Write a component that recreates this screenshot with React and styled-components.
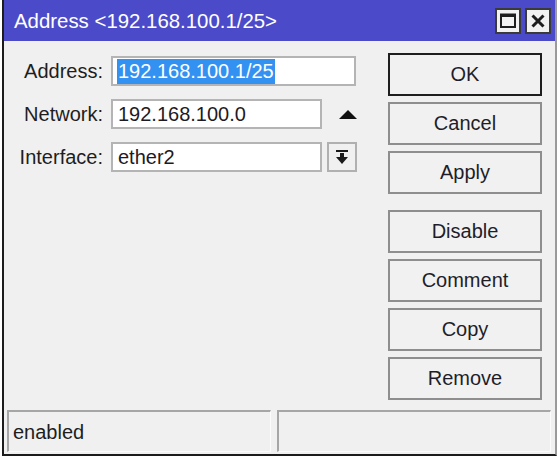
import React from 'react';
import styled, { createGlobalStyle } from 'styled-components';

const Global = createGlobalStyle`
  html, body {
    margin: 0;
    padding: 0;
    background: #ffffff;
  }
  body {
    font-family: "Liberation Sans", Arial, sans-serif;
  }
`;

const Window = styled.div`
  margin-left: 2px;
  width: 555px;
  height: 456px;
  box-sizing: border-box;
  display: flex;
  flex-direction: column;
  background: #f0f0f0;
  border-left: 2px solid #1c1c1c;
  border-right: 2px solid #9a9a9a;
  border-bottom: 2px solid #1c1c1c;
`;

const TitleBar = styled.div`
  height: 41px;
  flex: none;
  display: flex;
  align-items: center;
  padding: 0 4px 0 10px;
  background: #4b4bca;
  color: #ffffff;
  font-size: 20.4px;
`;

const Title = styled.div`
  flex: 1;
  margin-top: 1px;
`;

const TitleButtons = styled.div`
  display: flex;
  gap: 4px;
`;

const TitleButton = styled.div`
  width: 26px;
  height: 26px;
  box-sizing: border-box;
  display: flex;
  align-items: center;
  justify-content: center;
  background: #f2f2f2;
  border: 2px solid #3a3a3a;
`;

const Main = styled.div`
  height: 369px;
  flex: none;
  display: flex;
  padding-right: 13px;
`;

const Form = styled.div`
  flex: 1;
  display: grid;
  grid-template-columns: 99px auto;
  grid-auto-rows: 30px;
  row-gap: 13px;
  column-gap: 8px;
  align-content: start;
  padding-top: 15px;
`;

const Label = styled.div`
  align-self: center;
  text-align: right;
  font-size: 20px;
  color: #1e1e1e;
`;

const FieldRow = styled.div`
  display: flex;
  align-items: center;
`;

const Input = styled.div`
  width: ${(p) => p.$width}px;
  height: 30px;
  box-sizing: border-box;
  display: flex;
  align-items: center;
  padding-left: 5px;
  background: #ffffff;
  border: 2px solid #b4b4b4;
  font-size: 20px;
  color: #1e1a24;
  white-space: nowrap;
`;

const Selected = styled.span`
  background: #3391f2;
  color: #ffffff;
  padding: 1px 1px;
  margin-left: -1px;
`;

const ArrowSlot = styled.div`
  width: 30px;
  height: 30px;
  margin-left: 11px;
  display: flex;
  align-items: center;
  justify-content: center;
`;

const DropButton = styled.div`
  width: 30px;
  height: 30px;
  box-sizing: border-box;
  margin-left: 5px;
  display: flex;
  align-items: center;
  justify-content: center;
  background: #f0f0f0;
  border: 2px solid #b0b0b0;
`;

const Buttons = styled.div`
  width: 154px;
  flex: none;
  display: flex;
  flex-direction: column;
  gap: 6px;
  padding-top: 12px;
`;

const Button = styled.div`
  height: 43px;
  box-sizing: border-box;
  display: flex;
  align-items: center;
  justify-content: center;
  margin-top: ${(p) => (p.$spaced ? '10px' : '0')};
  background: #f1f1f1;
  border: 2px solid ${(p) => (p.$primary ? '#1e1e1e' : '#8e8e8e')};
  font-size: 20px;
  color: #1e1e2a;
`;

const StatusBar = styled.div`
  height: 44px;
  flex: none;
  box-sizing: border-box;
  display: grid;
  grid-template-columns: 264px 1fr;
  gap: 6px;
  padding: 0 4px 2px 3px;
`;

const StatusPanel = styled.div`
  box-sizing: border-box;
  display: flex;
  align-items: center;
  padding: 2px 0 0 4px;
  border-top: 2px solid #a6a6a6;
  border-left: 2px solid #a6a6a6;
  border-right: 1px solid #fbfbfb;
  border-bottom: 1px solid #fbfbfb;
  font-size: 20px;
  color: #1e1e1e;
`;

const buttons = ['OK', 'Cancel', 'Apply', 'Disable', 'Comment', 'Copy', 'Remove'];

export default function App() {
  return (
    <>
      <Global />
      <Window>
        <TitleBar>
          <Title>Address &lt;192.168.100.1/25&gt;</Title>
          <TitleButtons>
            <TitleButton>
              <svg width="16" height="15" viewBox="0 0 16 15">
                <rect x="1" y="1.5" width="14" height="12.5" fill="none" stroke="#1e1e1e" strokeWidth="2" />
                <rect x="1" y="1" width="14" height="3" fill="#1e1e1e" />
              </svg>
            </TitleButton>
            <TitleButton>
              <svg width="16" height="16" viewBox="0 0 16 16">
                <path d="M2.5 2.5 L13.5 13.5 M13.5 2.5 L2.5 13.5" stroke="#1e1e1e" strokeWidth="3" />
              </svg>
            </TitleButton>
          </TitleButtons>
        </TitleBar>
        <Main>
          <Form>
            <Label>Address:</Label>
            <FieldRow>
              <Input $width={245}>
                <Selected>192.168.100.1/25</Selected>
              </Input>
            </FieldRow>
            <Label>Network:</Label>
            <FieldRow>
              <Input $width={211}>192.168.100.0</Input>
              <ArrowSlot>
                <svg width="18" height="9" viewBox="0 0 18 9">
                  <path d="M9 0 L18 9 L0 9 Z" fill="#111" />
                </svg>
              </ArrowSlot>
            </FieldRow>
            <Label>Interface:</Label>
            <FieldRow>
              <Input $width={211}>ether2</Input>
              <DropButton>
                <svg width="12" height="14" viewBox="0 0 12 14">
                  <rect x="0" y="0" width="12" height="2" fill="#1a1a1a" />
                  <rect x="4" y="3" width="4" height="4" fill="#1a1a1a" />
                  <path d="M0 7 L12 7 L6 14 Z" fill="#1a1a1a" />
                </svg>
              </DropButton>
            </FieldRow>
          </Form>
          <Buttons>
            {buttons.map((b) => (
              <Button key={b} $primary={b === 'OK'} $spaced={b === 'Disable'}>
                {b}
              </Button>
            ))}
          </Buttons>
        </Main>
        <StatusBar>
          <StatusPanel>enabled</StatusPanel>
          <StatusPanel />
        </StatusBar>
      </Window>
    </>
  );
}
